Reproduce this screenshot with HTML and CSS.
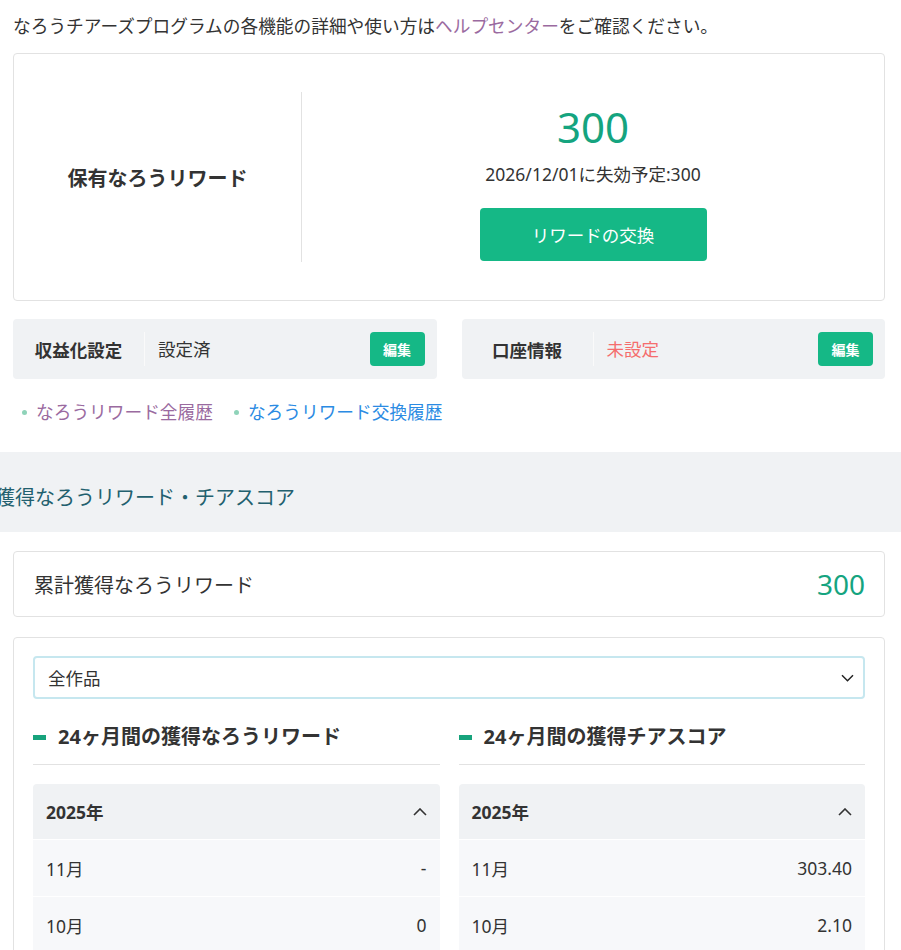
FILE: index.html
```html
<!DOCTYPE html>
<html lang="ja">
<head>
  <meta charset="UTF-8">
  <meta name="viewport" content="width=device-width, initial-scale=1.0">
  <title>なろうチアーズプログラム</title>
  <link rel="stylesheet" href="styles.css">
</head>
<body>

  <p class="intro">なろうチアーズプログラムの各機能の詳細や使い方は<a href="#" class="link-visited">ヘルプセンター</a>をご確認ください。</p>

  <div class="reward-card">
    <div class="reward-label">保有なろうリワード</div>
    <div class="reward-main">
      <div class="reward-points">300</div>
      <div class="reward-expire">2026/12/01に失効予定:300</div>
      <button class="exchange-button">リワードの交換</button>
    </div>
  </div>

  <div class="settings">
    <div class="setting-box">
      <div class="setting-label">収益化設定</div>
      <div class="setting-value">設定済</div>
      <button class="edit-button">編集</button>
    </div>
    <div class="setting-box">
      <div class="setting-label">口座情報</div>
      <div class="setting-value unset">未設定</div>
      <button class="edit-button">編集</button>
    </div>
  </div>

  <ul class="history-links">
    <li><a href="#" class="link-visited">なろうリワード全履歴</a></li>
    <li><a href="#" class="link-blue">なろうリワード交換履歴</a></li>
  </ul>

  <div class="section-band">
    <h2>獲得なろうリワード・チアスコア</h2>
  </div>

  <div class="total-card">
    <span>累計獲得なろうリワード</span>
    <span class="total-value">300</span>
  </div>

  <div class="detail-card">
    <div class="work-select">
      <span>全作品</span>
      <svg width="13" height="8" viewBox="0 0 13 8"><path d="M1 1.2l5.5 5.5 5.5-5.5" fill="none" stroke="#222" stroke-width="1.5"/></svg>
    </div>

    <div class="columns">
      <div class="column">
        <h3 class="col-title">24ヶ月間の獲得なろうリワード</h3>
        <div class="year-table">
          <div class="year-head">
            <span>2025年</span>
            <svg width="14" height="8" viewBox="0 0 14 8"><path d="M1 7l6-6 6 6" fill="none" stroke="#333" stroke-width="1.6"/></svg>
          </div>
          <div class="month-row"><span>11月</span><span>-</span></div>
          <div class="month-row"><span>10月</span><span>0</span></div>
        </div>
      </div>

      <div class="column">
        <h3 class="col-title">24ヶ月間の獲得チアスコア</h3>
        <div class="year-table">
          <div class="year-head">
            <span>2025年</span>
            <svg width="14" height="8" viewBox="0 0 14 8"><path d="M1 7l6-6 6 6" fill="none" stroke="#333" stroke-width="1.6"/></svg>
          </div>
          <div class="month-row"><span>11月</span><span>303.40</span></div>
          <div class="month-row"><span>10月</span><span>2.10</span></div>
        </div>
      </div>
    </div>
  </div>

</body>
</html>
```

FILE: styles.css
```css
body {
  font-family: 'Noto Sans', 'Noto Sans CJK JP', sans-serif;
  font-size: 17.5px;
  color: #333;
  background-color: #fff;
  margin: 0;
  padding: 13px 16px 0 13px;
  overflow: hidden;
}

a {
  text-decoration: none;
}

.link-visited {
  color: #9a6aa0;
}

.link-blue {
  color: #2b8be3;
}

.intro {
  margin: 0;
  line-height: 26px;
  font-size: 17.7px;
}

/* reward summary */

.reward-card {
  margin-top: 14px;
  border: 1px solid #e2e2e2;
  border-radius: 4px;
  padding: 38px 0;
  display: flex;
}

.reward-label {
  width: 287px;
  border-right: 1px solid #e2e2e2;
  display: flex;
  align-items: center;
  justify-content: center;
  font-size: 20px;
  font-weight: bold;
  height: 170px;
}

.reward-main {
  flex: 1;
  display: flex;
  flex-direction: column;
  align-items: center;
  padding-top: 9px;
}

.reward-points {
  font-size: 42px;
  line-height: 52px;
  color: #15a47f;
}

.reward-expire {
  margin-top: 8px;
  line-height: 26px;
}

.exchange-button {
  margin-top: 21px;
  width: 227px;
  height: 53px;
  background-color: #15b886;
  color: #fff;
  border: none;
  border-radius: 4px;
  font-family: inherit;
  font-size: 17.5px;
  cursor: pointer;
}

/* monetization settings */

.settings {
  margin-top: 18px;
  display: grid;
  grid-template-columns: 1fr 1fr;
  gap: 25px;
}

.setting-box {
  background-color: #f0f2f4;
  border-radius: 4px;
  height: 60px;
  display: flex;
  align-items: center;
  padding-right: 12px;
}

.setting-label {
  width: 131px;
  text-align: center;
  font-weight: bold;
}

.setting-value {
  flex: 1;
  border-left: 1px solid #fafafa;
  padding-left: 13px;
  line-height: 34px;
}

.setting-value.unset {
  color: #f56d6d;
}

.edit-button {
  width: 55px;
  height: 34px;
  background-color: #15b886;
  color: #fff;
  border: none;
  border-radius: 4px;
  font-family: inherit;
  font-size: 14px;
  font-weight: bold;
  cursor: pointer;
}

.history-links {
  list-style: none;
  margin: 20px 0 0;
  padding: 0 0 0 9px;
  display: flex;
  gap: 21px;
  line-height: 26px;
  font-size: 17.7px;
}

.history-links li {
  display: flex;
  align-items: center;
  gap: 9px;
}

.history-links li::before {
  content: '';
  width: 5px;
  height: 5px;
  border-radius: 50%;
  background-color: #8fd3b9;
}

/* earned rewards */

.section-band {
  margin: 27px -16px 0 -13px;
  background-color: #f0f2f4;
  padding: 31px 0 19px;
}

.section-band h2 {
  margin: 0 0 0 -5px;
  font-size: 20px;
  font-weight: normal;
  line-height: 30px;
  color: #22606e;
}

.total-card {
  margin-top: 19px;
  border: 1px solid #e2e2e2;
  border-radius: 4px;
  height: 64px;
  padding: 0 19px 0 20px;
  display: flex;
  justify-content: space-between;
  align-items: center;
  font-size: 20px;
}

.total-value {
  font-size: 28px;
  color: #15a47f;
}

.detail-card {
  margin-top: 20px;
  border: 1px solid #e2e2e2;
  border-radius: 4px;
  padding: 18px 19px 0;
  height: 330px;
}

.work-select {
  height: 39px;
  border: 2px solid #c6e7ef;
  border-radius: 4px;
  display: flex;
  align-items: center;
  justify-content: space-between;
  padding: 0 9px 0 13px;
}

.columns {
  margin-top: 20px;
  display: grid;
  grid-template-columns: 1fr 1fr;
  gap: 19px;
}

.col-title {
  margin: 0;
  font-size: 20px;
  line-height: 36px;
  padding-bottom: 9px;
  border-bottom: 1px solid #e2e2e2;
  display: flex;
  align-items: center;
  gap: 12px;
}

.col-title::before {
  content: '';
  width: 13px;
  height: 5px;
  background-color: #17a37c;
}

.year-table {
  margin-top: 19px;
}

.year-head {
  background-color: #f0f2f4;
  border-radius: 4px 4px 0 0;
  height: 55px;
  padding: 0 13px;
  display: flex;
  justify-content: space-between;
  align-items: center;
  font-weight: bold;
}

.month-row {
  background-color: #f7f8fa;
  height: 56px;
  padding: 0 13px;
  display: flex;
  justify-content: space-between;
  align-items: center;
  border-top: 1px solid #fff;
}
```
